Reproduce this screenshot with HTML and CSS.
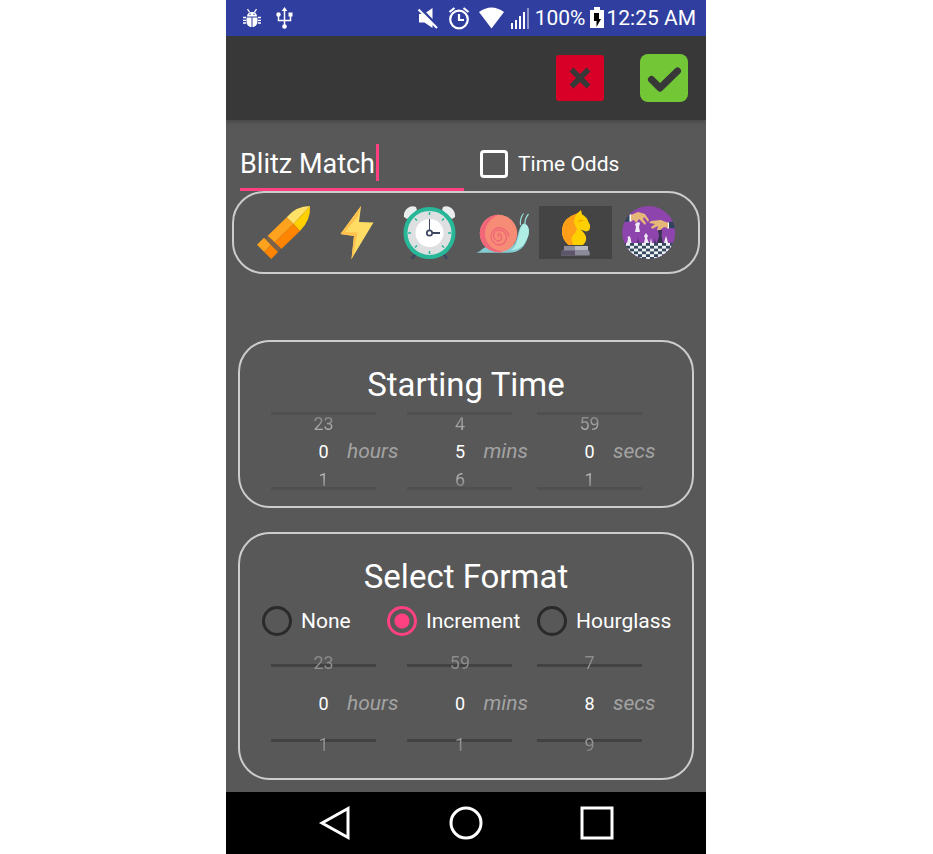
FILE: index.html
```html
<!DOCTYPE html>
<html lang="en">
<head>
<meta charset="utf-8">
<meta name="viewport" content="width=device-width, initial-scale=1">
<title>Blitz Match</title>
<link rel="stylesheet" href="styles.css">
</head>
<body>
<div class="phone">
  <div class="status">
    <svg width="18" height="22" viewBox="0 0 18 22" fill="#fff"><path d="M4 9.500C4 6.500 6 5 9 5s5 1.500 5 4.500zM4 2.500l1-.7 2 3-1 .7zM14 2.500l-1-.7-2 3 1 .7zM3.500 10.500h5V20C5.500 20 3.500 17.500 3.500 14.500zM9.500 10.500h5v4c0 3-2 5.500-5 5.500z"/><path d="M0 10.500h3M0 13.300h3M0 16h3M15 10.500h3M15 13.300h3M15 16h3" stroke="#fff" stroke-width="1.300"/><circle cx="7" cy="7.300" r=".7" fill="#303f9f"/><circle cx="11" cy="7.300" r=".7" fill="#303f9f"/></svg>
    <svg class="usb" width="17" height="22" viewBox="0 0 17 22" fill="#fff"><path d="M8.500 2v18M2.500 7v6.500h12V7" fill="none" stroke="#fff" stroke-width="1.500"/><path d="M8.500 0l2.800 4H5.700zM12.500 5.500h4v4h-4z"/><circle cx="2.500" cy="7.500" r="2.200"/><circle cx="8.500" cy="19.500" r="2.300"/></svg>
    <div class="status-right">
      <div class="status-icons">
        <svg width="25" height="24" viewBox="417 5 25 24"><path d="M419 13h5L432.500 7v20l-8-5.500H419z" fill="#fff"/><path d="M420.200 7.200L438 25.500" stroke="#303f9f" stroke-width="2.600"/><path d="M418.500 8.500L437 27" stroke="#fff" stroke-width="2.200"/></svg>
        <svg width="25" height="24" viewBox="448 5 25 24" fill="none" stroke="#fff" stroke-width="2.200"><circle cx="459" cy="18.500" r="8.800"/><path d="M459 13v6h5M449.500 11l5-4M468.500 11l-5-4"/></svg>
        <svg width="25" height="24" viewBox="479 5 25 24"><path d="M479 11q12.500-9 25 0l-12.500 16.500z" fill="#fff"/></svg>
        <svg width="20" height="24" viewBox="510 5 20 24" fill="#fff"><path d="M511 22h2v6h-2zM515 19h2v9h-2zM519 15h2v13h-2zM523 11h2v17h-2z"/><path d="M527 7h2v21h-2z" opacity=".45"/></svg>
      </div>
      <span>100%</span>
      <div class="clock">
        <svg width="14" height="24" viewBox="589 5 14 24"><path d="M589 9h4V6h6v3h4v18h-14z" fill="#fff"/><path d="M593 12h5v6h2l-4.500 8v-6H593z" fill="#000"/></svg>
        <span>12:25 AM</span>
      </div>
    </div>
  </div>

  <header class="toolbar">
    <button class="action cancel" aria-label="Cancel"><svg width="24" height="24" viewBox="0 0 24 24"><path d="M3.500 3.500l17 17M20.500 3.500l-17 17" stroke="#383838" stroke-width="5.500"/></svg></button>
    <button class="action confirm" aria-label="Save"><svg width="36" height="36" viewBox="0 0 36 36"><path d="M5.500 19.500l8.500 8.500L31.500 11" fill="none" stroke="#383838" stroke-width="7" stroke-linecap="round" stroke-linejoin="round"/></svg></button>
  </header>

  <main>
    <div class="name-row">
      <div class="name-field">
        <input type="text" value="Blitz Match" aria-label="Name">
        <span class="caret"></span>
      </div>
      <label class="odds"><input type="checkbox">Time Odds</label>
    </div>

    <div class="icon-bar">
      <button aria-label="Bullet"><svg viewBox="247 206 73 53"><path d="M310 206Q296 206 286.700 217.300L293.500 224z" fill="#ffe168"/><path d="M310 206Q311 220 300 231L293.500 224z" fill="#ffd000"/><path d="M286.700 217.300L267.500 236 274.500 242.500 293.500 224z" fill="#ffa31f"/><path d="M293.500 224L300 231 281.300 249 274.500 242.500z" fill="#ff8500"/><path d="M268 236L281 248.500 278 251.500 265.500 239z" fill="#7d6248"/><path d="M264 237.700L257 244.700 264.200 252 271 245z" fill="#ffa31f"/><path d="M271 245L264.200 252 271.300 259 278 252z" fill="#ff8500"/></svg></button>
      <button aria-label="Blitz"><svg viewBox="320 206 73 53"><path d="M361 206L340.500 234 354 236 351.500 259 373.500 222.500 359 222z" fill="#ffdc64"/><path d="M361 206L340.500 234 354 236 351.500 259 353 256.500 357.500 232.500 345 232 358 216z" fill="#ffc24e"/></svg></button>
      <button aria-label="Classical"><svg viewBox="393 206 73 53"><path d="M416 253l-4 6M443 253l4 6" stroke="#3f4662" stroke-width="3"/><path d="M404 217c-1-7 6-13 12-10l1 3-10 9zM455 217c1-7-6-13-12-10l-1 3 10 9z" fill="#e9edee"/><circle cx="429.500" cy="233" r="24" fill="#dddfe1" stroke="#26b899" stroke-width="4"/><circle cx="429.500" cy="233" r="14" fill="#fff"/><path d="M429.500 212v3M429.500 251v3M408 233h3M448 233h3M415 218.500l2 2M444 218.500l-2 2M415 247.500l2-2M444 247.500l-2-2" stroke="#26b899" stroke-width="1.500"/><path d="M429.500 219v11" stroke="#3f4662" stroke-width="1"/><path d="M432 233h8" stroke="#3f4662" stroke-width="2"/><circle cx="429.500" cy="233" r="2.700" fill="#fff" stroke="#3f4662" stroke-width="1.700"/></svg></button>
      <button aria-label="Slow"><svg viewBox="466 206 73 53"><path d="M476 252.700c5-1 6-5 11-6l25-1c7-3 5-20 12-22 5 1 6 8 4 13-3 10-8 16-20 16z" fill="#84cbd2"/><path d="M511 250c9-4 7-25 13-26.500 5 1 6 8 4 13-3 8-8 14-17 13.500z" fill="#aeeee4"/><path d="M520.500 225c-.5-5 1-9 3-11.500M525 225c-.5-5 1-8 3.500-11" stroke="#9ae0dc" stroke-width="1.200" fill="none"/><circle cx="498.500" cy="233.500" r="18.700" fill="#f78c76"/><path d="M498.500 214.800a18.700 18.700 0 0 0 0 37.400c2 .5 3 0 4-.5-21-3-24-28-4-36.900z" fill="#f2667a"/><path d="M499 237a2 2 0 0 1 0-3.500a4 4 0 0 1 0 7.500a5.500 5.500 0 0 1 0-11a7.500 7.500 0 0 1 0 15a9 9 0 0 1-8-8a9 9 0 0 1 8-9.500a11 11 0 0 1 10 9" stroke="#ef6676" stroke-width="1.300" fill="none"/></svg></button>
      <button class="chosen" aria-label="Chess" aria-pressed="true"><svg viewBox="539 206 73 53"><path d="M581 210L582 214.500Q587 217 588 221L590 225Q590.500 229 589 230.500L586 231.500 580.500 229.500Q585 233 586 237 587 241 583 245H568.500Q562 239 562 232 562 223 567 219 571 215.500 577 213.500z" fill="#ffd000"/><path d="M577 213.500Q571 215.500 567 219 562 223 562 232 562 239 568.500 245H573.500Q570 239 573 235 579 230 575.500 226 572 221 577 213.500z" fill="#ff9e18"/><path d="M577 222q4-3.500 7-1.500-3 .5-7 1.500z" fill="#f09a00"/><path d="M564 246h24v4l1.700 2v3.500H561v-3.500l3-2z" fill="#8c8b99"/><path d="M575 246h13v4h-13z" fill="#b7b7c1"/><path d="M561 250.500h14v5h-14z" fill="#5d566b"/></svg></button>
      <button aria-label="Simul"><svg viewBox="612 206 73 53"><defs><clipPath id="disc"><circle cx="648.700" cy="232.500" r="26.500"/></clipPath><pattern id="board" x="622" y="243" width="8" height="5.600" patternUnits="userSpaceOnUse"><path d="M0 0h8v5.600H0z" fill="#eef1f4"/><path d="M0 0h4v2.800H0zM4 2.800h4v2.800H4z" fill="#34495e"/></pattern></defs><g clip-path="url(#disc)"><path d="M622 206h54v54h-54z" fill="#8e44ad"/><path d="M622 243h54v17h-54z" fill="url(#board)"/><path d="M622 214l8 .5v7l-8 .5zM668 222l9-.5v7l-8-.5z" fill="#2f455a"/><path d="M629.500 214.500h2v7h-2zM667 222.500h2v6h-2z" fill="#fff"/><path d="M631 215l7-3 7 2 4 6-1 2-4-5-1 2 3 4-1 2-6-6-3 4-2-3-3 1zM668 223l-7-3-10 1-2 2 6 1-4 3 1 2 6-3-1 4 2 1 5-4 4 1z" fill="#e6b778"/><path d="M635 224l3-2 2 1-1 4 1 5h-5l1-5zM644 243l1-5-1-2 2-3 2 3-1 2 2 5zM627 243l1-4-.5-2 2-1 1 2 1 5zM664 243l1-4 1-3 1 3 1 4zM650 243l1-5 1 5z" fill="#f0eaf5"/><path d="M657 243l2-7-1-6h4l-.500 6 1.500 7z" fill="#34344e"/><path d="M637 243l1-6 1 6zM654 243l1-5 1 5z" fill="#563070"/></g></svg></button>
    </div>

    <section class="panel start">
      <h2>Starting Time</h2>
      <div class="pickers">
        <div class="picker"><div class="wheel"><button>23</button><input id="sh" value="0"><button>1</button></div><label for="sh">hours</label></div>
        <div class="picker"><div class="wheel"><button>4</button><input id="sm" value="5"><button>6</button></div><label for="sm">mins</label></div>
        <div class="picker"><div class="wheel"><button>59</button><input id="ss" value="0"><button>1</button></div><label for="ss">secs</label></div>
      </div>
    </section>

    <section class="panel format">
      <h2>Select Format</h2>
      <div class="radios">
        <label><input type="radio" name="format">None</label>
        <label><input type="radio" name="format" checked>Increment</label>
        <label><input type="radio" name="format">Hourglass</label>
      </div>
      <div class="pickers">
        <div class="picker"><div class="wheel"><button>23</button><input id="fh" value="0"><button>1</button></div><label for="fh">hours</label></div>
        <div class="picker"><div class="wheel"><button>59</button><input id="fm" value="0"><button>1</button></div><label for="fm">mins</label></div>
        <div class="picker"><div class="wheel"><button>7</button><input id="fs" value="8"><button>9</button></div><label for="fs">secs</label></div>
      </div>
    </section>
  </main>

  <nav>
    <button aria-label="Back"><svg width="36" height="36" viewBox="0 0 36 36"><path d="M5 18L31 3.500v29z"/></svg></button>
    <button aria-label="Home"><svg width="36" height="36" viewBox="0 0 36 36"><circle cx="18" cy="18" r="15"/></svg></button>
    <button aria-label="Recent apps"><svg width="36" height="36" viewBox="0 0 36 36"><path d="M3 3h30v30H3z"/></svg></button>
  </nav>
</div>
</body>
</html>
```
FILE: styles.css
```css
* { box-sizing: border-box; }

body {
  margin: 0;
  padding-right: 1px;
  background: #fff;
  font-family: Roboto, "Liberation Sans", sans-serif;
  color: #fff;
}

button, input {
  margin: 0;
  padding: 0;
  border: 0;
  background: none;
  font: inherit;
  color: inherit;
}

svg { display: block; flex: none; }

.phone {
  max-width: 480px;
  min-height: 100vh;
  margin: 0 auto;
  display: flex;
  flex-direction: column;
  background: #585858;
}

.status {
  display: flex;
  align-items: center;
  height: 36px;
  padding: 0 10px 0 17px;
  background: #303f9f;
  font-size: 21px;
  line-height: 36px;
}
.usb { margin-left: 15px; }
.status-right { margin-left: auto; display: flex; align-items: center; gap: 5px; }
.status-icons { display: flex; gap: 6px; }
.clock { display: flex; align-items: center; gap: 2px; }

.toolbar {
  display: flex;
  align-items: center;
  justify-content: flex-end;
  gap: 36px;
  height: 84px;
  padding: 0 18px;
  background: #383838;
  box-shadow: 0 2px 4px rgba(0, 0, 0, 0.2);
  clip-path: inset(0 0 -8px 0);
}
.action { display: flex; align-items: center; justify-content: center; width: 48px; }
.cancel { height: 46px; border-radius: 3px; background: #d80027; }
.confirm { height: 48px; border-radius: 8px; background: #73c736; }

main { flex: 1; padding: 24px 6px 12px; }

.name-row { display: flex; gap: 16px; padding-left: 8px; }
.name-field { position: relative; width: 224px; }
.name-field input {
  display: block;
  width: 100%;
  height: 47px;
  padding-bottom: 4px;
  border-bottom: 3px solid #ff4081;
  font-size: 27px;
  outline: 0;
}
.caret {
  position: absolute;
  left: 136px;
  top: 0;
  width: 3px;
  height: 37px;
  background: #ff4081;
}
.odds { display: flex; align-items: center; gap: 10px; height: 40px; font-size: 21px; }
.odds input {
  appearance: none;
  width: 28px;
  height: 28px;
  border: 3px solid #fff;
  border-radius: 4px;
}

.icon-bar {
  display: grid;
  grid-template-columns: repeat(6, 1fr);
  padding: 13px;
  border: 2px solid #ccc;
  border-radius: 32px;
}
.icon-bar button { height: 53px; }
.icon-bar svg { width: 100%; height: 100%; }
.icon-bar .chosen { background: #444; }

.panel {
  margin: 0 6px;
  padding: 23px 22px 0;
  border: 2px solid #ccc;
  border-radius: 32px;
}
.start { margin-top: 66px; padding-bottom: 16px; }
.format { margin-top: 24px; padding-bottom: 36px; }

h2 {
  margin: 0;
  font-size: 33px;
  line-height: 40px;
  font-weight: 400;
  text-align: center;
}

.radios {
  display: grid;
  grid-template-columns: 125px 150px auto;
  margin-top: 9px;
  font-size: 21px;
  white-space: nowrap;
}
.radios label { display: flex; align-items: center; gap: 9px; }
.radios input {
  appearance: none;
  flex: none;
  width: 30px;
  height: 30px;
  border: 3px solid #2a2a2a;
  border-radius: 50%;
}
.radios input:checked {
  border-color: #ff4081;
  background: radial-gradient(circle, #ff4081 7px, transparent 8px);
}

.pickers { display: flex; gap: 9px; padding-left: 9px; }
.start .pickers { margin-top: 7px; }
.format .pickers { margin-top: 28px; }
.picker { display: flex; align-items: center; }
.wheel {
  display: flex;
  flex-direction: column;
  justify-content: center;
  width: 105px;
  height: 78px;
  border: solid #4f4f4f;
  border-width: 3px 0;
  font-size: 18px;
}
.format .wheel { border-color: #424242; }
.wheel button, .wheel input {
  flex: none;
  width: 100%;
  height: 28px;
  text-align: center;
}
.format .wheel button, .format .wheel input { height: 41px; }
.wheel button { color: transparent; background-clip: text; }
.start .wheel button:first-child { background-image: linear-gradient(#707070, #c4c4c4); }
.start .wheel button:last-child { background-image: linear-gradient(#d8d8d8, #707070); }
.format .wheel button:first-child { background-image: linear-gradient(#848484, #989898); }
.format .wheel button:last-child { background-image: linear-gradient(#b0b0b0, #707070); }
.picker label { margin-left: -29px; font-size: 21px; font-style: italic; color: #a3a3a3; }

nav {
  display: flex;
  align-items: center;
  justify-content: center;
  gap: 95px;
  height: 62px;
  background: #000;
}
nav svg { fill: none; stroke: #fff; stroke-width: 3; }
```
